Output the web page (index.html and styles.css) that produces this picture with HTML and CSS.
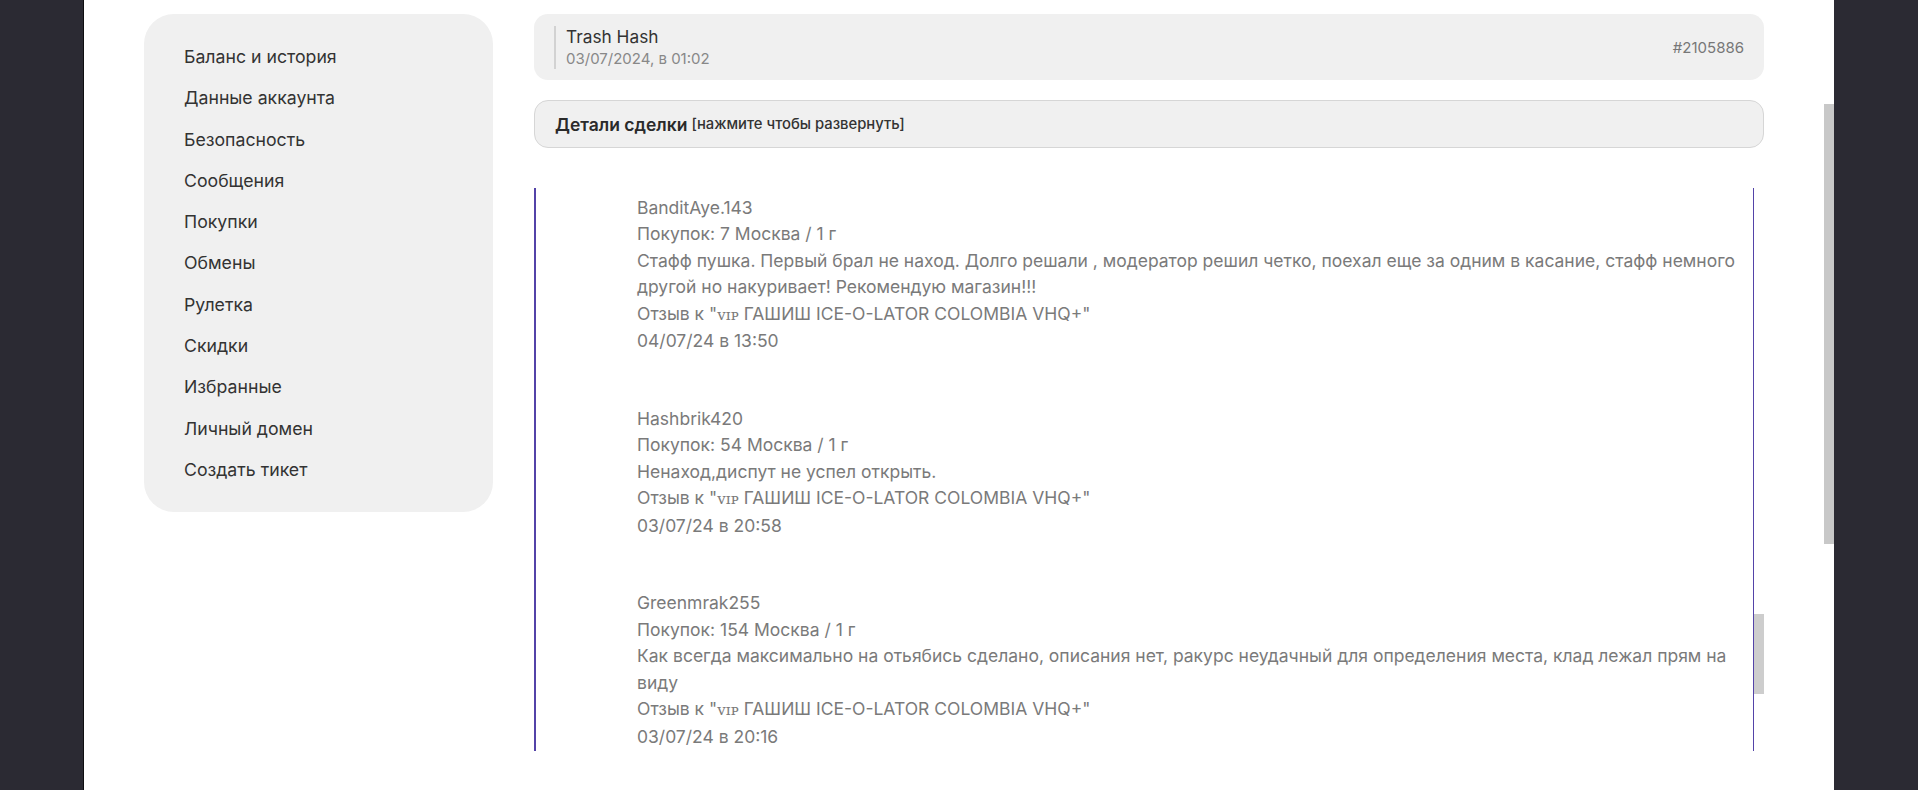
FILE: index.html
```html
<!DOCTYPE html>
<html lang="ru">
<head>
  <meta charset="UTF-8" />
  <meta name="viewport" content="width=device-width, initial-scale=1.0"/>
  <title>Сделка #2105886</title>
  <link rel="stylesheet" href="styles.css">
</head>
<body>
  <div class="page">
    <div class="layout">
      <!-- Sidebar menu -->
      <nav class="sidebar">
        <a href="#">Баланс и история</a>
        <a href="#">Данные аккаунта</a>
        <a href="#">Безопасность</a>
        <a href="#">Сообщения</a>
        <a href="#">Покупки</a>
        <a href="#">Обмены</a>
        <a href="#">Рулетка</a>
        <a href="#">Скидки</a>
        <a href="#">Избранные</a>
        <a href="#">Личный домен</a>
        <a href="#">Создать тикет</a>
      </nav>

      <main class="content">
        <div class="deal-head">
          <div class="deal-shop">
            <div class="shop-name">Trash Hash</div>
            <div class="shop-date">03/07/2024, в 01:02</div>
          </div>
          <div class="deal-id">#2105886</div>
        </div>

        <div class="deal-details">
          <b>Детали сделки</b> <span>[нажмите чтобы развернуть]</span>
        </div>

        <div class="reviews-wrap">
          <div class="reviews">
            <div class="reviews-inner">
              <div class="review">
                <div>BanditAye.143</div>
                <div>Покупок: 7 Москва / 1 г</div>
                <div>Стафф пушка. Первый брал не наход. Долго решали , модератор решил четко, поехал еще за одним в касание, стафф немного другой но накуривает! Рекомендую магазин!!!</div>
                <div>Отзыв к "<span class="vip">ᴠɪᴘ</span> ГАШИШ ICE-O-LATOR COLOMBIA VHQ+"</div>
                <div>04/07/24 в 13:50</div>
              </div>
              <div class="review">
                <div>Hashbrik420</div>
                <div>Покупок: 54 Москва / 1 г</div>
                <div>Ненаход,диспут не успел открыть.</div>
                <div>Отзыв к "<span class="vip">ᴠɪᴘ</span> ГАШИШ ICE-O-LATOR COLOMBIA VHQ+"</div>
                <div>03/07/24 в 20:58</div>
              </div>
              <div class="review">
                <div>Greenmrak255</div>
                <div>Покупок: 154 Москва / 1 г</div>
                <div>Как всегда максимально на отьябись сделано, описания нет, ракурс неудачный для определения места, клад лежал прям на виду</div>
                <div>Отзыв к "<span class="vip">ᴠɪᴘ</span> ГАШИШ ICE-O-LATOR COLOMBIA VHQ+"</div>
                <div>03/07/24 в 20:16</div>
              </div>
            </div>
          </div>
          <div class="inner-thumb"></div>
        </div>
      </main>
    </div>
    <div class="page-thumb"></div>
  </div>
</body>
</html>
```

FILE: styles.css
```css
/* Reset and base font */
* { margin: 0; padding: 0; box-sizing: border-box; font-family: "Inter", "Noto Sans", sans-serif; }

body { background: #2b2a33; color: #333; height: 790px; overflow: hidden; }

/* White page area */
.page {
  position: relative;
  margin-left: 83px;
  width: 1751px;
  height: 790px;
  background: #fff;
  border-left: 1px solid #0e0e10;
}

.layout {
  display: flex;
  gap: 41px;
  padding: 14px 70px 0 60px;
}

/* Sidebar */
.sidebar {
  flex: 0 0 349px;
  background: #f0f0f0;
  border-radius: 30px;
  padding: 22px 40px 22px;
  align-self: flex-start;
}
.sidebar a {
  display: block;
  color: #333;
  text-decoration: none;
  font-size: 17.7px;
  line-height: 21.3px;
  padding: 10px 0;
}

.content { flex: 1; min-width: 0; }

/* Deal header */
.deal-head {
  display: flex;
  align-items: center;
  justify-content: space-between;
  background: #f0f0f0;
  border-radius: 14px;
  height: 66px;
  padding: 0 20px;
}
.deal-shop {
  border-left: 2px solid #d2d2d2;
  padding-left: 10px;
}
.shop-name { font-size: 17.3px; line-height: 22px; color: #333; }
.shop-date { font-size: 15px; line-height: 21px; color: #888; }
.deal-id { font-size: 15px; color: #777; }

/* Collapsible details */
.deal-details {
  margin-top: 20px;
  height: 48px;
  display: flex;
  align-items: center;
  gap: 4px;
  padding: 0 20px;
  background: #f0f0f0;
  border: 1px solid #d6d6d6;
  border-radius: 14px;
}
.deal-details b { font-size: 17.5px; font-weight: 600; color: #2a2a2a; }
.deal-details span { font-size: 14.8px; font-weight: 500; color: #333; }

/* Reviews list */
.reviews-wrap {
  position: relative;
  margin-top: 40px;
  height: 563px;
  padding-right: 10px;
}
.reviews {
  height: 100%;
  overflow: hidden;
  border-left: 2px solid #5343a8;
  border-right: 1px solid #5343a8;
}
.reviews-inner { padding: 7px 4px 0 101px; }
.review {
  font-size: 17.5px;
  line-height: 26.4px;
  color: #7a7a7a;
  margin-bottom: 51.5px;
}
.vip { font-family: "DejaVu Serif", serif; font-size: 15px; }

/* Scrollbar thumbs */
.inner-thumb {
  position: absolute;
  right: 0;
  top: 426px;
  width: 10px;
  height: 80px;
  background: #cdcdcd;
}
.page-thumb {
  position: absolute;
  right: 0;
  top: 104px;
  width: 10px;
  height: 440px;
  background: #c8c8c8;
}
```
